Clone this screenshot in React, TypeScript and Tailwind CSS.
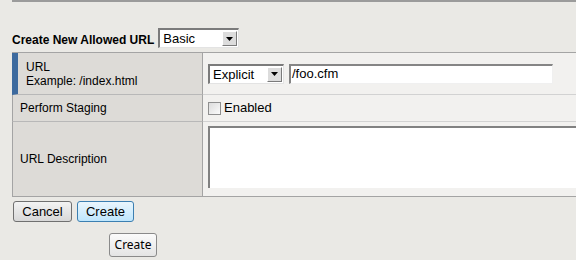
import React from 'react';

const arial = { fontFamily: '"Liberation Sans", Arial, sans-serif' };

// old-school sunken select with a raised arrow box
const ClassicSelect = ({ value, width }: { value: string; width: string }) => (
  <div
    className={`flex items-center h-[20px] ${width} bg-white border-t-2 border-l-2 border-[#7b7b7b] border-r border-b border-r-[#e3e3e3] border-b-[#e3e3e3]`}
  >
    <span className="flex-1 pl-[3px] text-[13px] leading-none text-black">{value}</span>
    <span className="mr-[1px] flex h-[15px] w-[15px] items-center justify-center bg-[#dcdcdc] border border-t-white border-l-white border-r-[#7b7b7b] border-b-[#7b7b7b]">
      <svg width="7" height="4" viewBox="0 0 7 4">
        <path d="M0 0h7L3.5 4z" fill="#000" />
      </svg>
    </span>
  </div>
);

export default function App() {
  return (
    <div className="w-[576px] h-[260px] overflow-hidden bg-[#eae9e5] text-black" style={arial}>
      <div className="ml-[12px] h-[2px] bg-[#9b9b9b]" />

      <div className="mt-[26px] flex items-center gap-[4px] pl-[12px]">
        <span className="text-[12px] font-bold leading-none pt-[3px]">Create New Allowed URL</span>
        <ClassicSelect value="Basic" width="w-[81px]" />
      </div>

      <div className="mt-[4px] ml-[12px] w-[620px] grid grid-cols-[191px_1fr] border-t border-b border-[#a4a4a4] text-[12px]">
        {/* row 1 */}
        <div className="h-[42px] flex flex-col justify-center bg-[#dddbd7] border-l-[6px] border-l-[#3d6a9e] border-r border-r-[#a4a4a4] border-b border-b-[#b8b8b8] pl-[8px] leading-[14px]">
          <span>URL</span>
          <span>Example: /index.html</span>
        </div>
        <div className="h-[42px] flex items-center gap-[5px] bg-[#f2f1ef] border-b border-b-[#d2d2d2] pl-[5px]">
          <ClassicSelect value="Explicit" width="w-[76px]" />
          <div className="h-[20px] w-[264px] flex items-center bg-white border-t-2 border-l-2 border-[#858585] border-r border-b border-r-[#f0f0f0] border-b-[#f0f0f0] pl-[1px] text-[13px]">
            /foo.cfm
          </div>
        </div>

        {/* row 2 */}
        <div className="h-[27px] flex items-center bg-[#dddbd7] border-l border-l-[#a4a4a4] border-r border-r-[#a4a4a4] border-b border-b-[#b8b8b8] pl-[7px]">
          Perform Staging
        </div>
        <div className="h-[27px] flex items-center gap-[3px] bg-[#f2f1ef] border-b border-b-[#d2d2d2] pl-[5px]">
          <span className="h-[13px] w-[13px] border border-[#8f8f8f] bg-gradient-to-br from-[#dcdcdc] to-[#fbfbfb]" />
          <span className="text-[13px]">Enabled</span>
        </div>

        {/* row 3 */}
        <div className="h-[74px] flex items-center bg-[#dddbd7] border-l border-l-[#a4a4a4] border-r border-r-[#a4a4a4] pl-[7px]">
          URL Description
        </div>
        <div className="h-[74px] bg-[#f2f1ef] pl-[5px] pt-[4px]">
          <div className="h-[62px] bg-white border-t-2 border-l-2 border-[#818181]" />
        </div>
      </div>

      <div className="mt-[4px] ml-[13px] flex gap-[5px] text-[13px]">
        <button className="h-[21px] w-[59px] rounded-[3px] border border-[#707070] bg-gradient-to-b from-[#f3f3f3] to-[#d8d8d8] leading-none">
          Cancel
        </button>
        <button className="h-[21px] w-[57px] rounded-[3px] border border-[#3c7fb1] bg-gradient-to-b from-[#eaf6fd] to-[#bee6fd] leading-none">
          Create
        </button>
      </div>

      <div className="mt-[10px] ml-[109px]">
        <button
          className="h-[24px] w-[48px] rounded-[3px] border border-[#8a8a8a] bg-gradient-to-b from-[#fbfbfb] to-[#e4e4e4] text-[12px] leading-none"
          style={{ fontFamily: '"Noto Sans", "DejaVu Sans", sans-serif' }}
        >
          Create
        </button>
      </div>
    </div>
  );
}
